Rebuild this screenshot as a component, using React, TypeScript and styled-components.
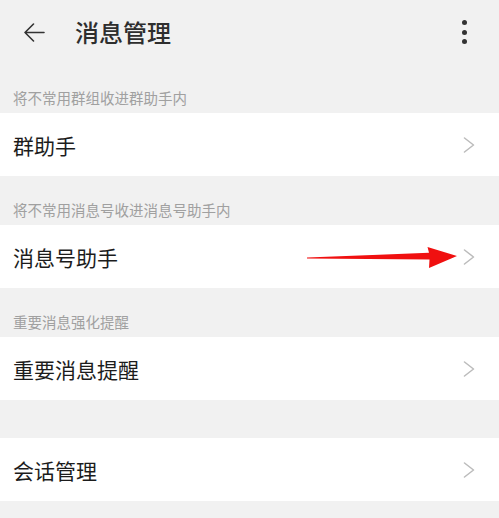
import styled, { createGlobalStyle } from 'styled-components';

const GlobalStyle = createGlobalStyle`
  html, body {
    margin: 0;
    padding: 0;
    background: #f1f1f1;
  }

  body {
    font-family: 'Noto Sans CJK SC', 'Noto Sans', sans-serif;
  }
`;

interface Item {
  label?: string;
  title: string;
  pointed?: boolean;
}

const items: Item[] = [
  { label: '将不常用群组收进群助手内', title: '群助手' },
  { label: '将不常用消息号收进消息号助手内', title: '消息号助手', pointed: true },
  { label: '重要消息强化提醒', title: '重要消息提醒' },
  { title: '会话管理' },
];

export default function App() {
  return (
    <Page>
      <GlobalStyle />
      <Header>
        <BackIcon width="22" height="19" viewBox="0 0 22 19">
          <path d="M21 9.5H2M10.5 1L2 9.5L10.5 18" />
        </BackIcon>
        <Title>消息管理</Title>
        <MoreButton>
          <Dot />
          <Dot />
          <Dot />
        </MoreButton>
      </Header>

      {items.map((item) => (
        <Section key={item.title}>
          {item.label ? <SectionLabel>{item.label}</SectionLabel> : <Gap />}
          <Row>
            <RowTitle>{item.title}</RowTitle>
            <Chevron width="12" height="16" viewBox="0 0 12 16">
              <polyline points="1.5,1 10.5,8 1.5,15" />
            </Chevron>
            {item.pointed && (
              <RedArrow width="152" height="23" viewBox="0 0 152 23">
                <path d="M1 11.6L123 6.8L121.5 1L151 10L123 22L123.5 13.6L1 12.6Z" />
              </RedArrow>
            )}
          </Row>
        </Section>
      ))}
    </Page>
  );
}

const Page = styled.div`
  width: 100%;
  min-height: 100vh;
  background: #f1f1f1;
`;

const Header = styled.header`
  display: flex;
  align-items: center;
  height: 64px;
  padding: 0 32px 0 23px;
  box-sizing: border-box;
`;

const BackIcon = styled.svg`
  flex: none;
  fill: none;
  stroke: #333333;
  stroke-width: 1.6;
  stroke-linecap: round;
  stroke-linejoin: round;
`;

const Title = styled.h1`
  flex: 1;
  margin: 0 0 0 30px;
  font-size: 24px;
  font-weight: 500;
  line-height: 32px;
  color: #2e2e2e;
`;

const MoreButton = styled.div`
  display: flex;
  flex-direction: column;
  align-items: center;
  gap: 4.5px;
`;

const Dot = styled.span`
  width: 5px;
  height: 5px;
  border-radius: 50%;
  background: #333333;
`;

const Section = styled.section`
  display: flex;
  flex-direction: column;
`;

const SectionLabel = styled.div`
  display: flex;
  align-items: flex-end;
  height: 49px;
  padding: 0 0 5px 13px;
  box-sizing: border-box;
  font-size: 14.5px;
  line-height: 20px;
  color: #a0a0a0;
`;

const Gap = styled.div`
  height: 38px;
`;

const Row = styled.div`
  position: relative;
  display: flex;
  align-items: center;
  justify-content: space-between;
  height: 63px;
  padding: 0 24px 0 13px;
  background: #ffffff;
`;

const RowTitle = styled.span`
  font-size: 21px;
  line-height: 28px;
  color: #1c1c1c;
`;

const Chevron = styled.svg`
  flex: none;
  fill: none;
  stroke: #bbbbbb;
  stroke-width: 1.5;
  stroke-linecap: round;
  stroke-linejoin: round;
`;

const RedArrow = styled.svg`
  position: absolute;
  left: 306px;
  top: 21px;
  fill: #f01010;
`;
